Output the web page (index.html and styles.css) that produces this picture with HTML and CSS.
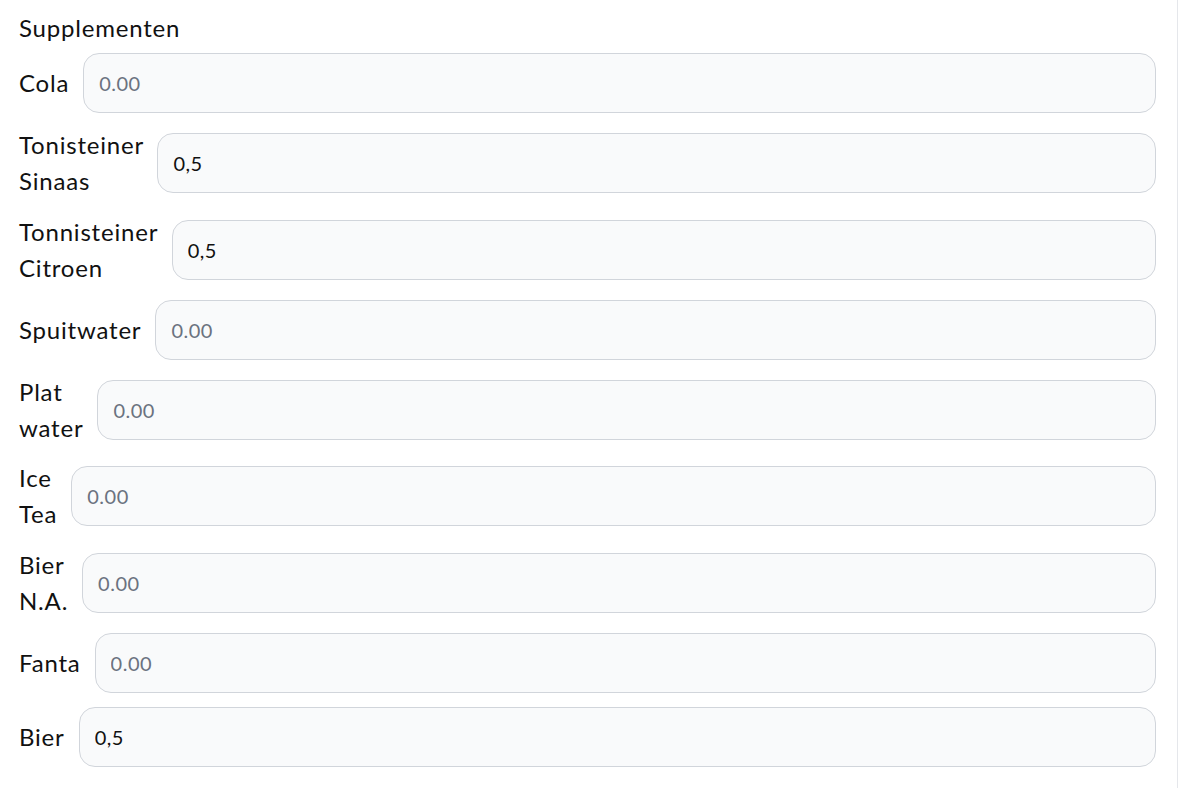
FILE: index.html
```html
<!DOCTYPE html>
<html lang="nl">
<head>
  <meta charset="UTF-8">
  <title>Supplementen</title>
  <link rel="stylesheet" href="styles.css">
</head>
<body>
  <div class="panel">
    <h2 class="title">Supplementen</h2>

    <div class="rows">
      <div class="row">
        <label for="cola">Cola</label>
        <input id="cola" type="text" placeholder="0.00">
      </div>
      <div class="row">
        <label for="tonisteiner-sinaas">Tonisteiner Sinaas</label>
        <input id="tonisteiner-sinaas" type="text" placeholder="0.00" value="0,5">
      </div>
      <div class="row">
        <label for="tonnisteiner-citroen">Tonnisteiner Citroen</label>
        <input id="tonnisteiner-citroen" type="text" placeholder="0.00" value="0,5">
      </div>
      <div class="row">
        <label for="spuitwater">Spuitwater</label>
        <input id="spuitwater" type="text" placeholder="0.00">
      </div>
      <div class="row">
        <label for="plat-water">Plat water</label>
        <input id="plat-water" type="text" placeholder="0.00">
      </div>
      <div class="row">
        <label for="ice-tea">Ice Tea</label>
        <input id="ice-tea" type="text" placeholder="0.00">
      </div>
      <div class="row">
        <label for="bier-na">Bier N.A.</label>
        <input id="bier-na" type="text" placeholder="0.00">
      </div>
      <div class="row">
        <label for="fanta">Fanta</label>
        <input id="fanta" type="text" placeholder="0.00">
      </div>
      <div class="row">
        <label for="bier">Bier</label>
        <input id="bier" type="text" placeholder="0.00" value="0,5">
      </div>
    </div>
  </div>
</body>
</html>
```

FILE: styles.css
```css
* {
  box-sizing: border-box;
}

body {
  margin: 0;
  background: #fff;
  color: #111;
  font-family: Lato, "Noto Sans", sans-serif;
}

.panel {
  width: 1178px;
  min-height: 788px;
  padding: 10px 21px 0 19px;
  border-right: 1px solid #e5e7eb;
}

.title {
  margin: 0 0 7px;
  font-size: 24px;
  font-weight: 400;
  line-height: 36px;
  letter-spacing: 0.8px;
}

.rows {
  display: flex;
  flex-direction: column;
  gap: 14.25px;
}

.row {
  display: flex;
  align-items: center;
  gap: 14px;
}

.row label {
  flex: 0 1 auto;
  width: min-content;
  font-size: 24px;
  line-height: 36px;
  letter-spacing: 0.8px;
}

.row input {
  flex: 1 1 auto;
  min-width: 0;
  height: 60px;
  padding: 0 15px;
  border: 1px solid #d1d5db;
  border-radius: 16px;
  background: #f9fafb;
  color: #111;
  font-family: inherit;
  font-size: 20px;
  letter-spacing: 0.5px;
}

.row input::placeholder {
  color: #6b7280;
}
```
